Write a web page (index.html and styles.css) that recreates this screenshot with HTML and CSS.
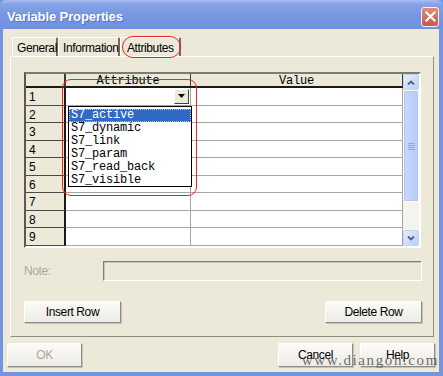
FILE: index.html
```html
<!DOCTYPE html>
<html lang="en">
<head>
  <meta charset="UTF-8" />
  <title>Variable Properties</title>
  <link rel="stylesheet" href="styles.css">
</head>
<body>

<div class="window">
  <div class="titlebar">
    <span class="title">Variable Properties</span>
    <span class="close">
      <svg width="11" height="11" viewBox="0 0 11 11"><path d="M1.5 1.5 L9.5 9.5 M9.5 1.5 L1.5 9.5" stroke="#fff" stroke-width="2.2" stroke-linecap="square"/></svg>
    </span>
  </div>

  <div class="client">
    <div class="tabs">
      <div class="tab">General</div>
      <div class="tab">Information</div>
      <div class="tab active">Attributes<span class="mark-tab"></span></div>
    </div>

    <div class="panel">
      <div class="grid-box">
        <div class="sheet">
          <div class="hcell"></div>
          <div class="hcell mono">Attribute</div>
          <div class="hcell mono">Value</div>

          <div class="rcell">1</div>
          <div class="cell combo"><span class="combo-btn"><svg width="7" height="4" viewBox="0 0 7 4"><path d="M0 0 H7 L3.5 4 Z" fill="#000"/></svg></span></div>
          <div class="cell"></div>
          <div class="rcell">2</div><div class="cell"></div><div class="cell"></div>
          <div class="rcell">3</div><div class="cell"></div><div class="cell"></div>
          <div class="rcell">4</div><div class="cell"></div><div class="cell"></div>
          <div class="rcell">5</div><div class="cell"></div><div class="cell"></div>
          <div class="rcell">6</div><div class="cell"></div><div class="cell"></div>
          <div class="rcell">7</div><div class="cell"></div><div class="cell"></div>
          <div class="rcell">8</div><div class="cell"></div><div class="cell"></div>
          <div class="rcell">9</div><div class="cell"></div><div class="cell"></div>
        </div>

        <div class="vscroll">
          <div class="sbtn"><svg width="8" height="5" viewBox="0 0 8 5"><path d="M1 4.5 L4 1.5 L7 4.5" fill="none" stroke="#4d6185" stroke-width="1.8"/></svg></div>
          <div class="thumb"><span class="grip"></span></div>
          <div class="track"></div>
          <div class="sbtn"><svg width="8" height="5" viewBox="0 0 8 5"><path d="M1 0.5 L4 3.5 L7 0.5" fill="none" stroke="#4d6185" stroke-width="1.8"/></svg></div>
        </div>

        <ul class="droplist mono">
          <li class="sel">S7_active</li>
          <li>S7_dynamic</li>
          <li>S7_link</li>
          <li>S7_param</li>
          <li>S7_read_back</li>
          <li>S7_visible</li>
        </ul>
        <div class="mark-col"></div>
      </div>

      <div class="note-row">
        <span class="note-label">Note:</span>
        <div class="note-field"></div>
      </div>

      <div class="row-buttons">
        <button class="btn wide">Insert Row</button>
        <button class="btn wide">Delete Row</button>
      </div>
    </div>

    <div class="dialog-buttons">
      <button class="btn" disabled>OK</button>
      <span class="spacer"></span>
      <button class="btn">Cancel</button>
      <button class="btn">Help</button>
    </div>

    <div class="watermark">www.diangon.com</div>
  </div>
</div>

</body>
</html>
```

FILE: styles.css
```css
* { box-sizing: border-box; }
body {
  margin: 0;
  background: #fff;
  font-family: 'Liberation Sans', Arial, sans-serif;
  font-size: 12px;
  letter-spacing: -0.4px;
  color: #000;
}

.mono {
  font-family: 'Liberation Mono', 'Courier New', monospace;
  font-size: 12px;
  letter-spacing: -0.2px;
}

.window {
  width: 443px;
  height: 376px;
  display: flex;
  flex-direction: column;
  background: #7493e0;
}

/* title bar */
.titlebar {
  height: 29px;
  flex: none;
  display: flex;
  align-items: center;
  justify-content: space-between;
  padding: 4px 4px 0 7px;
  background: linear-gradient(#a9bff2 0, #86a3e7 4px, #7897e2 50%, #7090df 100%);
  border-radius: 6px 6px 0 0;
}

.title {
  color: #fff;
  font-weight: bold;
  font-size: 13px;
  letter-spacing: -0.1px;
  text-shadow: 1px 1px 0 #5574c4;
}

.close {
  width: 18px;
  height: 20px;
  display: flex;
  align-items: center;
  justify-content: center;
  background: linear-gradient(#df8a7c, #c65a4c);
  border: 1px solid #f2f2f2;
  border-radius: 3px;
}

/* client area */
.client {
  flex: 1;
  position: relative;
  margin: 0 4px 4px 3px;
  background: #ece9d8;
  display: flex;
  flex-direction: column;
}

.tabs {
  display: flex;
  margin: 8px 0 0 9px;
  height: 19px;
}

.tab {
  position: relative;
  height: 19px;
  padding: 3px 4px 0 4px;
  border-left: 1px solid #fff;
  border-top: 1px solid #fff;
  border-right: 2px solid #6f6d62;
  border-radius: 2px 2px 0 0;
}

.tab:first-child { width: 46px; }
.tab:nth-child(2) { width: 62px; }
.tab.active { width: 61px; padding-left: 6px; }

.mark-tab {
  position: absolute;
  left: 1px;
  top: -2px;
  width: 59px;
  height: 22px;
  border: 1.5px solid #e8262a;
  border-radius: 11px;
}

.panel {
  height: 281px;
  margin: 0 5px 0 7px;
  padding: 15px 12px 0 13px;
  border: 1px solid #fff;
  border-right-color: #8f8d82;
  border-bottom-color: #8f8d82;
  display: flex;
  flex-direction: column;
}

/* grid */
.grid-box {
  position: relative;
  width: 397px;
  height: 176px;
  display: flex;
  border: 2px solid;
  border-color: #7b7a73 #fff #fff #5a5953;
  background: #ece9d8;
}

.sheet {
  width: 377px;
  display: grid;
  grid-template-columns: 40px 125px 212px;
  grid-template-rows: 14px repeat(9, minmax(0, 1fr));
  overflow: hidden;
}

.hcell {
  border-right: 1px solid #3c3c3c;
  border-bottom: 2px solid #1a1a1a;
  text-align: center;
  padding-top: 2px;
  line-height: 11px;
  background: #ece9d8;
}

.hcell:first-child { border-right-width: 2px; }

.rcell {
  border-right: 2px solid #1a1a1a;
  border-bottom: 1px solid #4a4a4a;
  padding: 3px 0 0 3px;
  line-height: 13px;
  font-size: 12px;
  background: #ece9d8;
}

.cell {
  background: #fff;
  border-right: 1px solid #a5a5a5;
  border-bottom: 1px solid #a5a5a5;
}

.combo {
  display: flex;
  justify-content: flex-end;
  padding: 1px 1px 1px 0;
}

.combo-btn {
  width: 15px;
  display: flex;
  align-items: center;
  justify-content: center;
  background: #ece9d8;
  border: 1px solid;
  border-color: #fff #404040 #404040 #fff;
}

.vscroll {
  width: 16px;
  display: flex;
  flex-direction: column;
  background: #f4f3ee;
}

.sbtn {
  height: 16px;
  display: flex;
  align-items: center;
  justify-content: center;
  background: linear-gradient(135deg, #e6eefc, #bccdf5);
  border: 1px solid #c3d3f7;
  border-radius: 2px;
}

.thumb {
  height: 112px;
  display: flex;
  align-items: center;
  justify-content: center;
  background: linear-gradient(90deg, #cad8fb, #b7cbf7);
  border: 1px solid #fff;
  border-radius: 2px;
  box-shadow: inset 0 0 0 1px #b1c3ef;
}

.grip {
  width: 7px;
  height: 7px;
  background: repeating-linear-gradient(#8fa8e0 0 1px, transparent 1px 2px);
}

.track { flex: 1; }

.droplist {
  position: absolute;
  left: 42px;
  top: 32px;
  width: 124px;
  height: 81px;
  margin: 0;
  padding: 2px 0 0;
  list-style: none;
  background: #fff;
  border: 1px solid #000;
}

.droplist li {
  height: 13px;
  line-height: 13px;
  padding-left: 2px;
}

.droplist li.sel {
  background: #316ac5;
  color: #fff;
  outline: 1px dotted #a8c0ea;
  outline-offset: -1px;
}

.mark-col {
  position: absolute;
  left: 36px;
  top: 5px;
  width: 135px;
  height: 117px;
  border: 1.5px solid #e8262a;
  border-radius: 9px;
}

/* note + buttons */
.note-row {
  display: flex;
  align-items: center;
  margin-top: 13px;
  height: 20px;
}

.note-label {
  width: 79px;
  color: #aca899;
}

.note-field {
  flex: 1;
  height: 20px;
  margin-right: -1px;
  border: 1px solid;
  border-color: #7f7e78 #fff #fff #7f7e78;
  box-shadow: inset 1px 1px 0 #c9c6b8;
}

.row-buttons {
  display: flex;
  justify-content: space-between;
  margin-top: 20px;
  margin-right: -1px;
}

.btn {
  width: 75px;
  height: 24px;
  padding: 0;
  font-family: 'Liberation Sans', Arial, sans-serif;
  font-size: 12px;
  letter-spacing: -0.4px;
  color: #000;
  background: linear-gradient(#fbfbf8, #ecebe5);
  border: 1px solid;
  border-color: #fff #8d8c86 #8d8c86 #fff;
  box-shadow: 1px 1px 0 #c7c5bb;
}

.btn.wide { width: 97px; height: 22px; }

.btn:disabled { color: #aca899; }

.dialog-buttons {
  display: flex;
  gap: 7px;
  margin: 6px 4px 0 4px;
}

.spacer { flex: 1; }

.watermark {
  position: absolute;
  right: 0;
  bottom: 3px;
  font-family: 'Liberation Serif', 'Times New Roman', serif;
  font-size: 15px;
  letter-spacing: 1.6px;
  color: rgba(60, 60, 60, 0.75);
}
```
